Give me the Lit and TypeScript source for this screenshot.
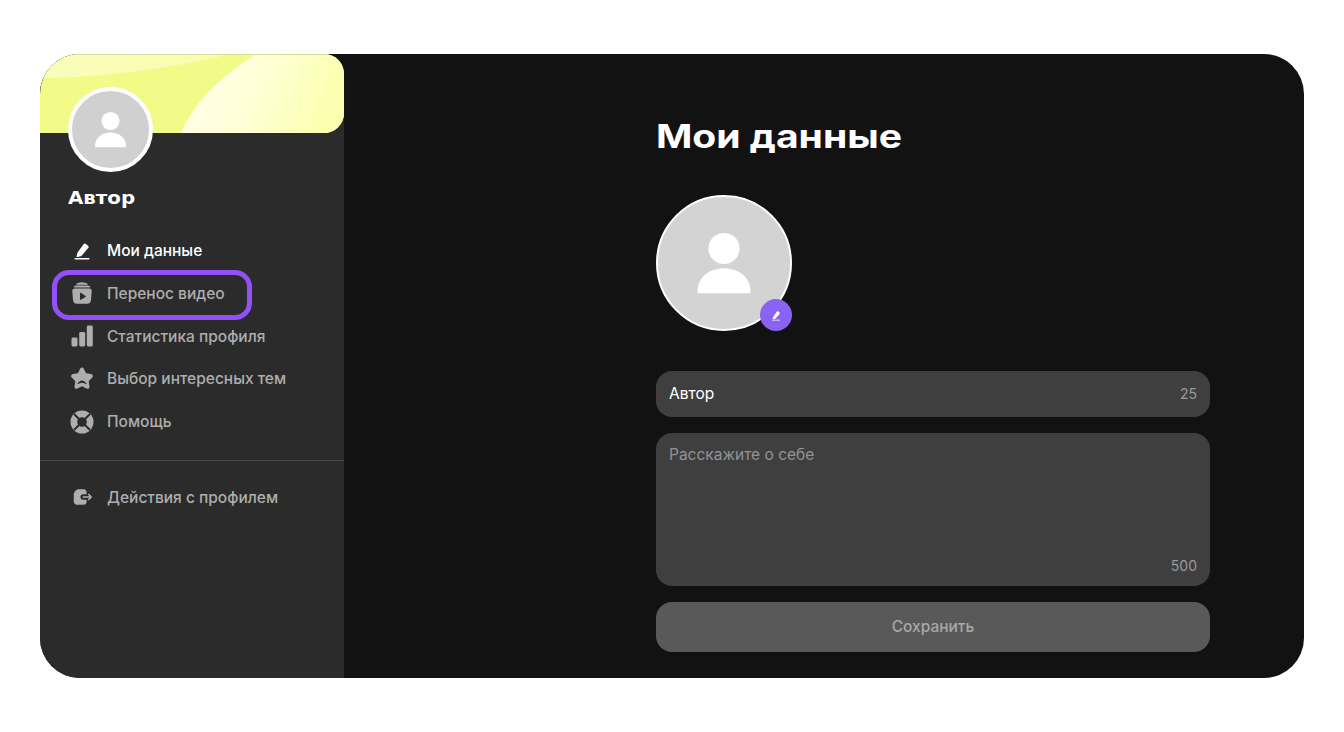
import { LitElement, html, css, svg } from "lit";
import { customElement } from "lit/decorators.js";

const pen = svg`<path fill="currentColor" d="M13.6 6.2a1.600 1.600 0 0 1 2.300-.2l2.100 1.800a1.600 1.600 0 0 1 .2 2.300l-6.600 7.600a2 2 0 0 1-1 .6l-3.200.7a.7.7 0 0 1-.8-.9l.9-3.300a2 2 0 0 1 .4-.8z"/><rect x="4.500" y="20" width="15" height="1.400" rx=".7" fill="currentColor"/>`;
const archive = svg`<path fill="currentColor" d="M6.300 3C7.500 1.900 9.600 1.200 12 1.200s4.500.7 5.700 1.800c.3.300.1.700-.3.700H6.600c-.4 0-.6-.4-.3-.7zM3.900 5.600c.7-.7 1.600-1 2.600-1h11c1 0 1.900.3 2.600 1 .3.300.1.800-.3.800H4.200c-.4 0-.6-.5-.3-.8z"/><path fill="currentColor" fill-rule="evenodd" d="M4.600 7.400h14.800c1.400 0 2.400 1.200 2.300 2.600l-.7 9.300c-.1 1.900-1.700 3.400-3.500 3.400H6.500c-1.800 0-3.400-1.500-3.500-3.400L2.300 10c-.1-1.400.9-2.600 2.300-2.600zM10 12.300v6c0 .5.500.8.900.5l4.700-2.800c.4-.3.400-.8 0-1.100l-4.700-3.100c-.4-.3-.9 0-.9.500z"/>`;
const bars = svg`<rect x="1.500" y="13.500" width="6" height="9" rx="1.400" fill="currentColor"/><rect x="9.200" y="8" width="6" height="14.500" rx="1.400" fill="currentColor"/><rect x="16.800" y="1.500" width="6" height="21" rx="1.400" fill="currentColor"/>`;
const star = svg`<path fill="currentColor" fill-rule="evenodd" d="M10.200 1.800c.8-1.600 2.800-1.600 3.600 0l2.300 4.500 5 .8c1.700.3 2.400 2.300 1.200 3.500l-3.600 3.600.8 5.200c.3 1.700-1.500 3-3 2.200L12 19.300l-4.500 2.300c-1.500.8-3.300-.5-3-2.200l.8-5.200-3.600-3.600C.5 9.400 1.200 7.400 2.900 7.100l5-.8zM7.600 16.400c-.3.300-.1.800.4.700 1.200-.4 2.400-1.400 4-1.400s2.800 1 4 1.400c.5.100.7-.4.400-.7-1.100-1.200-2.700-2.800-4.400-2.800s-3.300 1.600-4.400 2.800z"/>`;
const buoy = svg`<circle cx="12" cy="12" r="11.500" fill="currentColor"/><path stroke="#2b2b2b" stroke-width="1.900" d="M4 4l16 16M20 4 4 20"/><circle cx="12" cy="12" r="4.800" fill="#2b2b2b"/>`;
const exit = svg`<path fill="currentColor" fill-rule="evenodd" d="M9 3.500h4.800c1.800 0 3.200 1.300 3.200 3V9h-3.700a3 3 0 0 0 0 6H17v2.500c0 1.700-1.400 3-3.200 3H6.500C4.500 20.500 3 19 3 17v-7c0-3.600 2.500-6.500 6-6.500z"/><path fill="none" stroke="currentColor" stroke-width="1.800" stroke-linecap="round" stroke-linejoin="round" d="M13.500 12H22M19.300 9.300 22 12l-2.700 2.700"/>`;

const person = svg`<circle cx="50" cy="39" r="11.800" fill="#fff"/><path fill="#fff" d="M30 73V71C30 61 39 54 50 54s20 7 20 17v2z"/>`;

const items = [
  { label: "Мои данные", icon: pen, active: true },
  { label: "Перенос видео", icon: archive },
  { label: "Статистика профиля", icon: bars },
  { label: "Выбор интересных тем", icon: star },
  { label: "Помощь", icon: buoy },
];

@customElement("app-root")
export class AppRoot extends LitElement {
  static styles = css`
    :host {
      display: block;
      height: 732px;
      box-sizing: border-box;
      padding: 54px 40px;
      background: #fff;
      font-family: Inter, "Noto Sans", sans-serif;
    }
    .card {
      position: relative;
      display: flex;
      height: 624px;
      border-radius: 40px;
      overflow: hidden;
      background: #121212;
    }
    .side {
      width: 304px;
      flex: none;
      background: #2b2b2b;
      display: flex;
      flex-direction: column;
    }
    .banner {
      display: block;
      width: 304px;
      height: 79px;
    }
    .ava {
      width: 85px;
      height: 85px;
      box-sizing: border-box;
      margin: -46px 0 0 28px;
      border: 4px solid #fff;
      border-radius: 50%;
      background: #d0d0d0;
      position: relative;
      display: flex;
    }
    .ava svg { width: 100%; height: 100%; }
    .name {
      margin: 14px 0 0 28px;
      height: 24px;
      line-height: 24px;
      font-family: "DejaVu Sans", sans-serif;
      font-weight: 700;
      font-size: 18px;
      color: #fff;
      transform: scaleX(1.1);
      transform-origin: left;
    }
    nav {
      margin-top: 19px;
      display: flex;
      flex-direction: column;
    }
    .item {
      display: flex;
      align-items: center;
      height: 42.850px;
      padding-left: 30px;
      gap: 13px;
      font-size: 15.500px;
      font-weight: 500;
      color: #aeaeae;
      white-space: nowrap;
    }
    .item.active { color: #fff; }
    .item svg { width: 24px; height: 24px; flex: none; }
    .rule {
      height: 1px;
      background: #454545;
      margin-top: 16.750px;
    }
    .item.last { margin-top: 15px; }
    .item.last svg { width: 22px; height: 22px; margin: 0 1px; }
    .hl {
      position: absolute;
      left: 12px;
      top: 216px;
      width: 200px;
      height: 50px;
      box-sizing: border-box;
      border: 5px solid #9450f7;
      border-radius: 17px;
    }
    main {
      flex: 1;
      padding: 0 94px 0 312px;
      display: flex;
      flex-direction: column;
    }
    h1 {
      margin: 65px 0 0;
      height: 36px;
      line-height: 36px;
      font-family: Inter, sans-serif;
      font-weight: 700;
      font-size: 32px;
      color: #fff;
      white-space: nowrap;
      transform: scaleX(1.22);
      transform-origin: left;
    }
    .photo {
      position: relative;
      margin-top: 40px;
      width: 136px;
      height: 136px;
      box-sizing: border-box;
      border: 2px solid #fff;
      border-radius: 50%;
      background: #d3d3d3;
      display: flex;
    }
    .photo > svg { width: 100%; height: 100%; }
    .badge {
      position: absolute;
      right: -2px;
      bottom: -2px;
      width: 32px;
      height: 32px;
      border-radius: 50%;
      background: #8a63f2;
      color: #fff;
      display: flex;
      align-items: center;
      justify-content: center;
    }
    .badge svg { width: 14px; height: 14px; }
    .field {
      background: #3f3f3f;
      border-radius: 16px;
      box-sizing: border-box;
      font-size: 15.500px;
      color: #fff;
      display: flex;
      justify-content: space-between;
      padding: 0 13px;
    }
    .input {
      margin-top: 40px;
      height: 46px;
      align-items: center;
      padding-bottom: 2px;
    }
    .area {
      margin-top: 16px;
      height: 153px;
      padding-top: 13px;
      padding-bottom: 11px;
      color: #939393;
      line-height: 18px;
    }
    .count {
      font-size: 14px;
      color: #9a9a9a;
    }
    .area .count { align-self: flex-end; }
    .save {
      margin-top: 16px;
      height: 50px;
      box-sizing: border-box;
      padding-bottom: 2px;
      border-radius: 16px;
      background: #595959;
      color: #a8a8a8;
      font-size: 15.500px;
      font-weight: 500;
      display: flex;
      align-items: center;
      justify-content: center;
    }
  `;

  render() {
    return html`
      <div class="card">
        <aside class="side">
          <svg class="banner" viewBox="0 0 304 79">
            <defs>
              <linearGradient id="g" x1="0" y1="0" x2="1" y2="0.200">
                <stop offset="0" stop-color="#ffffee"/>
                <stop offset="0.500" stop-color="#ffffd8"/>
                <stop offset="1" stop-color="#fcffb0"/>
              </linearGradient>
              <linearGradient id="h" x1="0" y1="0" x2="1" y2="0">
                <stop offset="0" stop-color="#f9fdbc"/>
                <stop offset="1" stop-color="#f9fdae"/>
              </linearGradient>
              <clipPath id="c"><path d="M0 79V0h284a20 20 0 0 1 20 20v39a20 20 0 0 1-20 20z"/></clipPath>
            </defs>
            <rect width="304" height="40" fill="#121212"/>
            <g clip-path="url(#c)">
              <rect width="304" height="79" fill="#f3fb88"/>
              <path fill="url(#h)" d="M0 24C50 24 125 16 190 0H0z"/>
              <path fill="url(#g)" d="M141 79C156 45 184 20 217 0h87v79z"/>
              <rect width="304" height="1" fill="#d9dd9c"/>
            </g>
          </svg>
          <div class="ava"><svg viewBox="0 0 100 100">${person}</svg></div>
          <div class="name">Автор</div>
          <nav>
            ${items.map(
              (i) => html`<div class="item ${i.active ? "active" : ""}">
                <svg viewBox="0 0 24 24">${i.icon}</svg><span>${i.label}</span>
              </div>`
            )}
          </nav>
          <div class="rule"></div>
          <div class="item last">
            <svg viewBox="0 0 24 24">${exit}</svg><span>Действия с профилем</span>
          </div>
        </aside>
        <main>
          <h1>Мои данные</h1>
          <div class="photo">
            <svg viewBox="0 0 100 100">${person}</svg>
            <div class="badge"><svg viewBox="0 0 24 24">${pen}</svg></div>
          </div>
          <div class="field input"><span>Автор</span><span class="count">25</span></div>
          <div class="field area"><span>Расскажите о себе</span><span class="count">500</span></div>
          <div class="save">Сохранить</div>
        </main>
        <div class="hl"></div>
      </div>
    `;
  }
}
